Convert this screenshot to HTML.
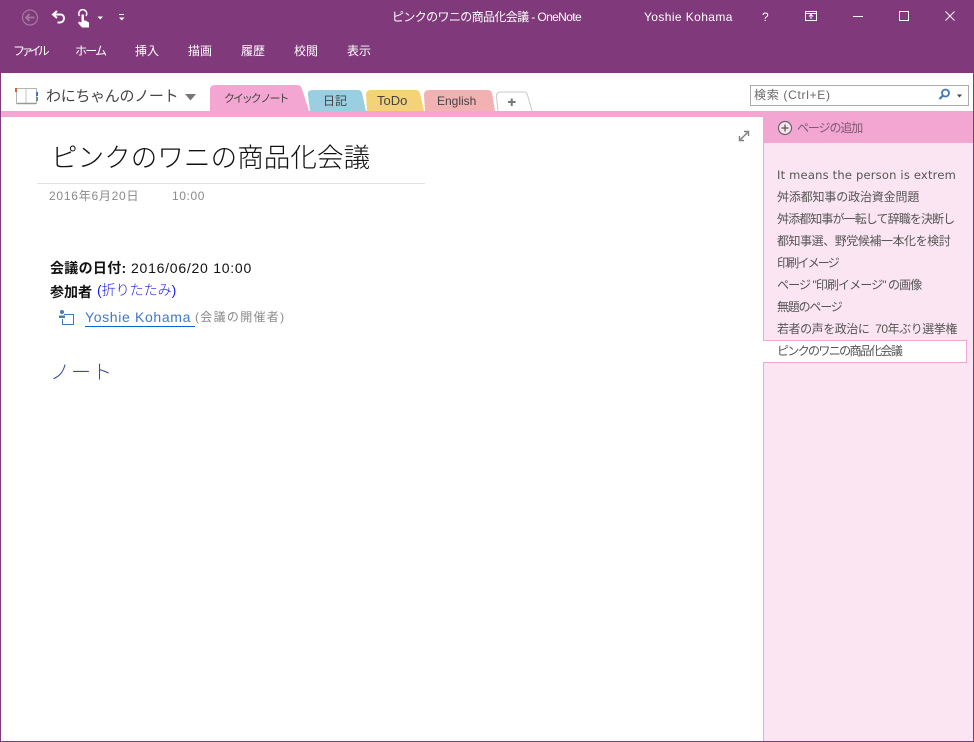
<!DOCTYPE html>
<html lang="ja"><head><meta charset="utf-8">
<style>
html,body{margin:0;padding:0;width:974px;height:742px;overflow:hidden;background:#fff}
body{position:relative;font-family:"Liberation Sans","Noto Sans CJK JP",sans-serif;color:#000}
.a{position:absolute;white-space:nowrap}
.menu{top:43px;font-size:12px;line-height:16px;color:#fff}
.pl{left:777px;font-size:12px;line-height:16px;color:#555;width:190px;overflow:hidden}
.tab{top:0;font-size:12px;color:#444}
</style></head><body>
<div class="a" style="left:0;top:0;width:974px;height:73px;background:#80397b"></div>
<div class="a" style="left:0;top:73px;width:1px;height:669px;background:#80397b"></div>
<div class="a" style="left:973px;top:73px;width:1px;height:669px;background:#80397b"></div>
<div class="a" style="left:0;top:741px;width:974px;height:1px;background:#80397b"></div>

<svg class="a" style="left:0;top:0" width="140" height="36" viewBox="0 0 140 36" fill="none">
<circle cx="30" cy="17.500" r="7.500" stroke="#a678a3" stroke-width="1.200"/>
<path d="M34.500 17.500H26.500M29.500 14L26 17.500L29.500 21" stroke="#a678a3" stroke-width="1.800"/>
<path d="M57 11L53 14.500L57 18M53.500 14.500H60.500C65 14.500 65.500 22 60 22.500H57.500" stroke="#fff" stroke-width="2"/>
<path d="M81.500 14.500V22.500L79 21.500L78 23L82 27.500H89V22.500L85.500 20.500H84V14.500Z" fill="#fff"/>
<path d="M79.500 16A4 4 0 1 1 86 16" stroke="#fff" stroke-width="1.500"/>
<path d="M97.500 16.500H103L100.250 19.500Z" fill="#fff"/>
<path d="M119 14.500H124" stroke="#fff" stroke-width="1"/>
<path d="M119 17.500H124.500L121.750 20.500Z" fill="#fff"/>
</svg>

<div class="a" style="left:392px;top:9px;font-size:12px;line-height:16px;color:#fff;letter-spacing:-.62px">ピンクのワニの商品化会議 - OneNote</div>
<div class="a" style="left:644px;top:9px;font-size:12px;line-height:16px;color:#fff;letter-spacing:.4px">Yoshie Kohama</div>
<div class="a" style="left:762px;top:9px;font-size:12px;line-height:16px;color:#fff">?</div>
<svg class="a" style="left:800px;top:6px" width="170" height="20" viewBox="0 0 170 20" fill="none" stroke="#fff">
<rect x="5.500" y="5.500" width="11" height="9"/><path d="M5.500 7.500H16.500"/><path d="M11 13V9M9 10.500L11 8.500L13 10.500"/>
<path d="M53 10.500H63"/>
<rect x="99.500" y="5.500" width="9" height="9"/>
<path d="M145.500 5.500L154.500 14.500M154.500 5.500L145.500 14.500"/>
</svg>

<div class="a menu" style="left:13px;letter-spacing:-3.800px">ファイル</div>
<div class="a menu" style="left:75px;letter-spacing:-1.800px">ホーム</div>
<div class="a menu" style="left:135px">挿入</div>
<div class="a menu" style="left:188px">描画</div>
<div class="a menu" style="left:241px">履歴</div>
<div class="a menu" style="left:294px">校閲</div>
<div class="a menu" style="left:347px">表示</div>

<svg class="a" style="left:14px;top:87px" width="24" height="20" viewBox="0 0 24 20" fill="none">
<path d="M2.500 1.500H22.500V16.500H2.500Z" stroke="#b4b4b4"/><path d="M12 2V16" stroke="#c4c4c4" stroke-width="1"/><path d="M3 16.500H22" stroke="#999" stroke-width="1.400"/>
<rect x="1" y="1" width="2" height="4" fill="#c8643c"/><rect x="22" y="5" width="2" height="4" fill="#3c78b4"/><rect x="22" y="10" width="2" height="4" fill="#5a9a82"/>
</svg>
<div class="a" style="left:46px;top:85px;font-size:15px;line-height:24px;color:#444;letter-spacing:-.3px">わにちゃんのノート</div>
<svg class="a" style="left:185px;top:94px" width="11" height="7"><path d="M0 0H11L5.500 6.500Z" fill="#777"/></svg>

<svg class="a" style="left:205px;top:83px" width="335" height="30" viewBox="0 0 335 30">
<path d="M5 28V7Q5 2 10 2H92Q96 2 97 6L104 28Z" fill="#f3a6d2"/>
<path d="M105 28L103 12Q102 7 108 7H153Q156 7 157 10L161 28Z" fill="#99cfe0"/>
<path d="M162 28L161 12Q161 7 166 7H211Q214 7 215 10L219 28Z" fill="#f3d278"/>
<path d="M220 28L219 12Q219 7 224 7H283Q286 7 287 10L290 28Z" fill="#f2b1b3"/>
<path d="M293 28L291.500 14Q291 9 296 9H319Q322 9 322.500 12L327 28" fill="#fff" stroke="#c8c8c8"/>
</svg>
<div class="a tab" style="left:224px;top:91px;font-size:11px;line-height:16px;letter-spacing:-2.100px">クイック ノート</div>
<div class="a tab" style="left:323px;top:93px;line-height:16px">日記</div>
<div class="a tab" style="left:377px;top:93px;line-height:16px;font-size:13px">ToDo</div>
<div class="a tab" style="left:437px;top:93px;line-height:16px">English</div>
<svg class="a" style="left:507px;top:97px" width="10" height="10"><path d="M1 5H8.500M4.750 1.500V9" stroke="#777" stroke-width="2"/></svg>

<div class="a" style="left:750px;top:85px;width:217px;height:19px;border:1px solid #ababab;background:#fff"></div>
<div class="a" style="left:754px;top:87px;font-size:12px;line-height:16px;color:#6a6a6a;letter-spacing:.7px">検索 (Ctrl+E)</div>
<svg class="a" style="left:938px;top:87px" width="28" height="16" fill="none">
<circle cx="7.500" cy="6" r="3.500" stroke="#3f78b5" stroke-width="1.800"/><path d="M5 8.500L1.500 12" stroke="#3f78b5" stroke-width="2.200"/>
<path d="M19 7.500H24L21.500 10.500Z" fill="#444"/>
</svg>

<div class="a" style="left:1px;top:111px;width:972px;height:6px;background:#f3a6d2"></div>
<div class="a" style="left:763px;top:117px;width:210px;height:26px;background:#f3a6d2"></div>
<div class="a" style="left:763px;top:143px;width:210px;height:598px;background:#fbe5f2;box-sizing:border-box;border-left:1px solid #f3a6d2"></div>
<svg class="a" style="left:777px;top:120px" width="16" height="16" fill="none">
<circle cx="8" cy="8" r="6.500" fill="#fbe5f2" stroke="#666" stroke-width="1.200"/><path d="M4.500 8H11.500M8 4.500V11.500" stroke="#666" stroke-width="1.500"/>
</svg>
<div class="a" style="left:797px;top:120px;font-size:12px;line-height:16px;color:#7d5a72;letter-spacing:-1.100px">ページの追加</div>

<div class="a pl" style="top:167px;font-family:'DejaVu Sans',sans-serif;font-size:11.500px;letter-spacing:.2px">It means the person is extrem</div>
<div class="a pl" style="top:189px;letter-spacing:-.15px">舛添都知事の政治資金問題</div>
<div class="a pl" style="top:211px;letter-spacing:-.9px">舛添都知事が一転して辞職を決断し</div>
<div class="a pl" style="top:233px;letter-spacing:-.45px">都知事選、野党候補一本化を検討</div>
<div class="a pl" style="top:255px;letter-spacing:-1.800px">印刷イメージ</div>
<div class="a pl" style="top:277px;letter-spacing:-.9px">ページ "印刷イメージ" の画像</div>
<div class="a pl" style="top:299px;letter-spacing:-1.200px">無題のページ</div>
<div class="a pl" style="top:321px;letter-spacing:-.45px">若者の声を政治に&nbsp; 70年ぶり選挙権</div>
<div class="a" style="left:763px;top:340px;width:204px;height:23px;box-sizing:border-box;background:#fff;border:1px solid #f3a6d2;border-left:0"></div>
<div class="a pl" style="top:343px;letter-spacing:-1.650px">ピンクのワニの商品化会議</div>

<svg class="a" style="left:738px;top:130px" width="12" height="12" fill="none" stroke="#808080">
<path d="M2.500 9.500L9.500 2.500" stroke-width="1.400"/><path d="M6 1.500H10.500V6M1.500 6V10.500H6" stroke-width="1.400"/>
</svg>

<div class="a" style="left:51px;top:141px;font-size:26.500px;line-height:34px;color:#111;letter-spacing:.1px;font-weight:300">ピンクのワニの商品化会議</div>
<div class="a" style="left:37px;top:183px;width:388px;height:1px;background:#e1e1e1"></div>
<div class="a" style="left:49px;top:188px;font-size:12px;line-height:16px;color:#8a8a8a;letter-spacing:.75px">2016年6月20日</div>
<div class="a" style="left:172px;top:188px;font-size:12px;line-height:16px;color:#8a8a8a;letter-spacing:.6px">10:00</div>

<div class="a" style="left:50px;top:259px;font-size:14px;line-height:18px;color:#111"><b style="letter-spacing:.3px">会議の日付:</b><span style="position:absolute;left:81px;top:0;letter-spacing:.75px">2016/06/20 10:00</span></div>
<div class="a" style="left:50px;top:283px;font-size:14px;line-height:18px;font-weight:bold;color:#111">参加者</div>
<div class="a" style="left:97px;top:281px;font-size:14px;line-height:18px;color:#1a1ae6;font-weight:300">(折りたたみ)</div>
<svg class="a" style="left:58px;top:309px" width="18" height="17" fill="none">
<circle cx="4" cy="3" r="2" fill="#4a78b0"/><path d="M1 9V6.500H7V9Z" fill="#4a78b0"/>
<path d="M6 5.500H15.500V15.500H4.500V10" stroke="#3f78b5"/>
</svg>
<div class="a" style="left:85px;top:308px;font-size:14px;line-height:18px;color:#3f78c8;border-bottom:1px solid #0a66cc;letter-spacing:.65px;width:110px">Yoshie Kohama</div>
<div class="a" style="left:195px;top:309px;font-size:12px;line-height:16px;color:#8a8a8a;letter-spacing:1.300px">(会議の開催者)</div>
<div class="a" style="left:50px;top:359px;font-size:20px;line-height:28px;color:#3a4a98;letter-spacing:1px;font-weight:300">ノート</div>
</body></html>
